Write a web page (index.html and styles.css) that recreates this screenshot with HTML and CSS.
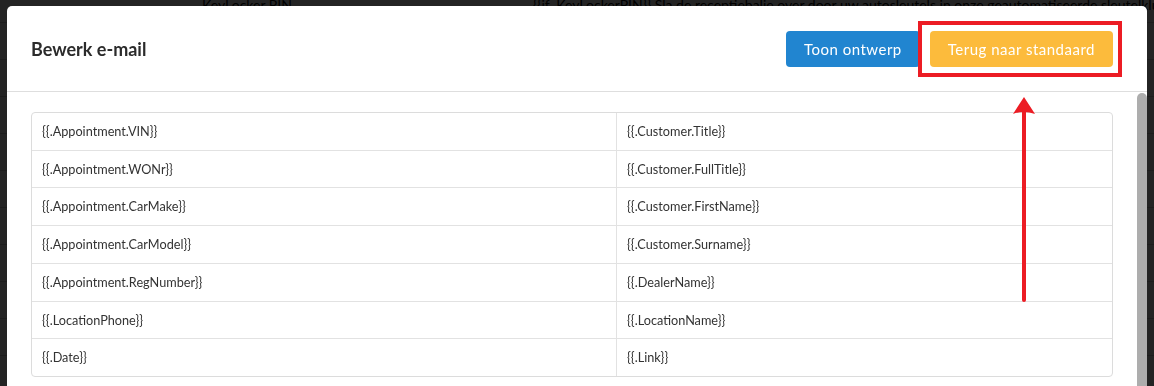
FILE: index.html
```html
<!DOCTYPE html>
<html lang="nl">
<head>
  <meta charset="UTF-8">
  <meta name="viewport" content="width=device-width, initial-scale=1.0">
  <title>Bewerk e-mail</title>
  <link rel="stylesheet" href="styles.css">
</head>
<body>
  <div class="page">
    <div class="bg-row">
      <div class="bg-key">KeyLocker PIN</div>
      <div class="bg-val">{{if .KeyLockerPIN}} Sla de receptiebalie over door uw autosleutels in onze geautomatiseerde sleutelkluis achter te laten</div>
    </div>
    <div class="bg-row"><div class="bg-key">Ophalen</div><div class="bg-val">U kunt uw auto ophalen op het afgesproken tijdstip, de sleutels liggen klaar bij de receptie en</div></div>
    <div class="bg-row"><div class="bg-key">Bevestiging</div><div class="bg-val">Wij bevestigen hierbij uw afspraak voor onderhoud aan uw auto bij onze vestiging, tot dan en</div></div>
    <div class="bg-row"><div class="bg-key">Herinnering</div><div class="bg-val">Vergeet niet om uw kenteken en kilometerstand bij de hand te houden wanneer u ons belt over de</div></div>
    <div class="bg-row"><div class="bg-key">Annulering</div><div class="bg-val">Uw afspraak is geannuleerd, neem contact met ons op als u een nieuwe afspraak wilt maken, dit is</div></div>
    <div class="bg-row"><div class="bg-key">Contact</div><div class="bg-val">Bel ons gerust voor vragen over uw afspraak of uw onderhoudsbeurt, wij helpen u graag verder tot</div></div>
    <div class="bg-row"><div class="bg-key">Voorwaarden</div><div class="bg-val">Op al onze werkzaamheden zijn de algemene voorwaarden van toepassing, zie onze website</div></div>
    <div class="bg-row"><div class="bg-key">Werkorder</div><div class="bg-val">Uw werkorder wordt aangemaakt zodra de auto bij ons binnen is</div></div>
    <div class="bg-row"><div class="bg-key">Offerte</div><div class="bg-val">U ontvangt de offerte per e-mail zodra de diagnose klaar is voor u</div></div>
    <div class="bg-row"><div class="bg-key">Betaling</div><div class="bg-val">Betalen kan met pin of via de betaallink in deze e-mail, dank u voor uw bezoek aan onze garage</div></div>
    <div class="bg-row"><div class="bg-key">Afmelden</div><div class="bg-val">Wilt u geen e-mails meer ontvangen, klik dan hier om u af te melden voor onze nieuwsbrief Nu</div></div>
  </div>

  <div class="dimmer">
    <div class="modal">
      <div class="modal-header">
        <h2>Bewerk e-mail</h2>
        <div class="actions">
          <button class="btn btn-blue">Toon ontwerp</button>
          <button class="btn btn-yellow">Terug naar standaard</button>
        </div>
      </div>
      <div class="modal-body">
        <div class="modal-content">
          <table class="vars">
            <colgroup><col class="key-col"><col></colgroup>
            <tr><td>{{.Appointment.VIN}}</td><td>{{.Customer.Title}}</td></tr>
            <tr><td>{{.Appointment.WONr}}</td><td>{{.Customer.FullTitle}}</td></tr>
            <tr><td>{{.Appointment.CarMake}}</td><td>{{.Customer.FirstName}}</td></tr>
            <tr><td>{{.Appointment.CarModel}}</td><td>{{.Customer.Surname}}</td></tr>
            <tr><td>{{.Appointment.RegNumber}}</td><td>{{.DealerName}}</td></tr>
            <tr><td>{{.LocationPhone}}</td><td>{{.LocationName}}</td></tr>
            <tr><td>{{.Date}}</td><td>{{.Link}}</td></tr>
          </table>
        </div>
        <div class="scroll-thumb"></div>
      </div>
    </div>

    <!-- annotation -->
    <div class="highlight"></div>
    <svg class="arrow" width="24" height="208" viewBox="0 0 24 208">
      <path d="M12 1 L23 18 Q12 14 1 18 Z" fill="#ec1c24"/>
      <line x1="12" y1="14" x2="12" y2="204" stroke="#ec1c24" stroke-width="4" stroke-linecap="round"/>
    </svg>
  </div>
</body>
</html>
```

FILE: styles.css
```css
body {
  margin: 0;
  font-family: Lato, 'Liberation Sans', sans-serif;
  color: #333;
  background: #fff;
}
.page {
  margin-top: -14px;
  font-size: 14px;
  color: #000;
}
.bg-row {
  display: flex;
  align-items: center;
  height: 36px;
  border-bottom: 1px solid #ccc;
  white-space: nowrap;
  overflow: hidden;
}
.bg-key {
  flex: 0 0 331px;
  padding-left: 202px;
}
.dimmer {
  position: fixed;
  inset: 0;
  background: rgba(0, 0, 0, 0.86);
  overflow: hidden;
}
.modal {
  margin: 6px 7px 0;
  background: #fff;
  border-radius: 5px 5px 0 0;
  overflow: hidden;
}
.modal-header {
  display: flex;
  align-items: center;
  justify-content: space-between;
  height: 85px;
  padding: 0 34px 0 24px;
  border-bottom: 1px solid #dedede;
}
.modal-header h2 {
  margin: 0;
  font-size: 18px;
  font-weight: 700;
  color: #2b2b2b;
}
.actions {
  display: flex;
  gap: 10px;
}
.btn {
  height: 36px;
  padding: 0 18px;
  border: none;
  border-radius: 4px;
  font-family: Lato, 'Liberation Sans', sans-serif;
  font-size: 15px;
  letter-spacing: 0.5px;
  color: #fff;
  cursor: pointer;
}
.btn-blue {
  background: #2185d0;
}
.btn-yellow {
  background: #fcbb3c;
}
.modal-body {
  display: flex;
}
.modal-content {
  flex: 1;
  padding: 20px 24px;
}
.scroll-thumb {
  width: 10px;
  margin-top: 1px;
  background: #adadad;
  border-radius: 5px 5px 0 0;
}
.vars {
  width: 100%;
  table-layout: fixed;
  border-collapse: separate;
  border-spacing: 0;
  border: 1px solid #dcdcdc;
  border-radius: 4px;
  font-size: 12.7px;
}
.key-col {
  width: 584px;
}
.vars td {
  padding: 11px 10px 10px;
  line-height: 15.7px;
  vertical-align: middle;
}
.vars tr + tr td {
  border-top: 1px solid #e2e2e2;
}
.vars td + td {
  border-left: 1px solid #e2e2e2;
}
.highlight {
  position: absolute;
  left: 918px;
  top: 21px;
  width: 196px;
  height: 48px;
  border: 4px solid #ec1c24;
}
.arrow {
  position: absolute;
  left: 1012px;
  top: 96px;
}
```
